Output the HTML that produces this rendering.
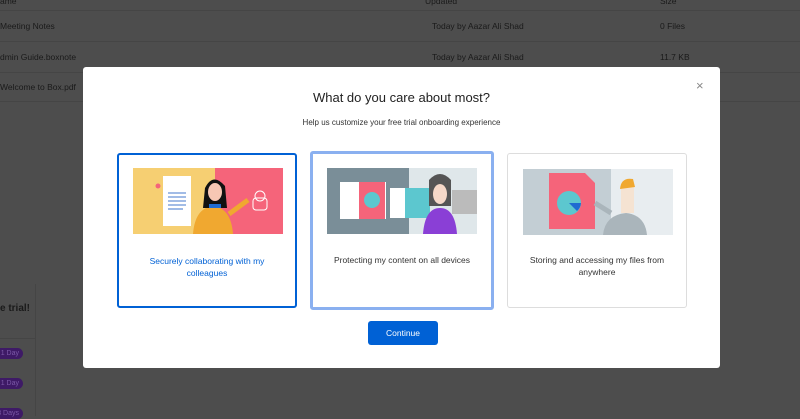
<!DOCTYPE html>
<html><head><meta charset="utf-8"><style>
*{margin:0;padding:0;box-sizing:border-box}
html,body{background:#4d4d4d}
body{width:800px;height:416px;overflow:hidden;font-family:"Liberation Sans",sans-serif;position:relative;color:#222}
.abs{position:absolute}
.tx{position:absolute;font-size:8.5px;color:#1a1a1a;white-space:nowrap}
.ln{position:absolute;left:0;width:800px;height:1px;background:#454545}
.modal{position:absolute;left:83px;top:67px;width:637px;height:301px;background:#fff;border-radius:3px}
.card{position:absolute;background:#fff;border:1px solid #ddd;border-radius:3px}
.card .t{position:absolute;left:0;right:0;text-align:center;font-size:8.5px;line-height:12px;color:#333}
.pill{position:absolute;left:-10px;width:33px;height:11px;border-radius:6px;background:#3e1a66;color:#7c5aa8;font-size:7px;text-align:right;padding-right:4px;line-height:11px}
</style></head><body>
<div class="tx" style="left:0;top:-4px">ame</div><div class="tx" style="left:425px;top:-4px">Updated</div><div class="tx" style="left:660px;top:-4px">Size</div>
<div class="ln" style="top:10px"></div>
<div class="tx" style="left:0;top:21px">Meeting Notes</div><div class="tx" style="left:432px;top:21px">Today by Aazar Ali Shad</div><div class="tx" style="left:660px;top:21px">0 Files</div>
<div class="ln" style="top:41px"></div>
<div class="tx" style="left:0;top:52px">dmin Guide.boxnote</div><div class="tx" style="left:432px;top:52px">Today by Aazar Ali Shad</div><div class="tx" style="left:660px;top:52px">11.7 KB</div>
<div class="ln" style="top:72px"></div>
<div class="tx" style="left:0;top:82px">Welcome to Box.pdf</div>
<div class="ln" style="top:101px"></div>
<div class="abs" style="left:0;top:284px;width:36px;height:132px;border-right:1px solid #454545"></div>
<div class="abs" style="left:0;top:303px;font-size:10px;font-weight:bold;color:#1a1a1a">e trial!</div>
<div class="abs" style="left:0;top:338px;width:36px;border-top:1px solid #454545"></div>
<div class="pill" style="top:348px">1 Day</div>
<div class="pill" style="top:378px">1 Day</div>
<div class="pill" style="top:408px">3 Days</div>

<div class="modal">
<div class="abs" style="left:613px;top:11px;font-size:13px;color:#888">×</div>
<div class="abs" style="left:0;right:0;top:23px;text-align:center;font-size:13px;color:#222">What do you care about most?</div>
<div class="abs" style="left:0;right:0;top:51px;text-align:center;font-size:8px;color:#333">Help us customize your free trial onboarding experience</div>

<div class="card" style="left:34px;top:86px;width:180px;height:155px;border:2px solid #0061d5">
<svg class="abs" style="left:14px;top:13px" width="150" height="66">
<rect width="85" height="66" fill="#f6cf72"/><rect x="82" width="68" height="66" fill="#f5647a"/>
<rect x="30" y="8" width="28" height="50" fill="#fff"/><circle cx="25" cy="18" r="2.5" fill="#f5647a"/>
<g stroke="#6a95d8" stroke-width="1.3"><line x1="35" y1="25" x2="53" y2="25"/><line x1="35" y1="29" x2="53" y2="29"/><line x1="35" y1="33" x2="53" y2="33"/><line x1="35" y1="37" x2="53" y2="37"/><line x1="35" y1="41" x2="50" y2="41"/></g>
<path d="M60 66 Q62 40 80 38 Q98 40 100 66Z" fill="#f0a830"/><path d="M96 46 L115 32" stroke="#f0a830" stroke-width="5"/>
<path d="M72 20 Q80 4 92 18 L94 40 L70 40Z" fill="#111"/><ellipse cx="82" cy="24" rx="7" ry="9" fill="#f7c7b4"/><rect x="76" y="36" width="12" height="4" fill="#1f6bd1"/>
<circle cx="127" cy="28" r="5" fill="none" stroke="#fff"/><rect x="120" y="30" width="14" height="12" rx="3" fill="none" stroke="#fff"/>
</svg>
<div class="t" style="top:100px;color:#0061d5;padding:0 25px">Securely collaborating with my colleagues</div>
</div>

<div class="card" style="left:227px;top:84px;width:184px;height:159px;border:3px solid #8ab0f0">
<svg class="abs" style="left:14px;top:14px" width="150" height="66">
<rect width="82" height="66" fill="#7a8e98"/><rect x="82" width="68" height="66" fill="#dfe7ea"/>
<rect x="13" y="14" width="46" height="37" fill="#fff"/><rect x="32" y="14" width="26" height="37" fill="#f5647a"/>
<circle cx="45" cy="32" r="8" fill="#5cc7cf"/><rect x="63" y="20" width="40" height="30" fill="#fff"/><rect x="78" y="20" width="25" height="30" fill="#5cc7cf"/>
<path d="M96 66 Q98 40 113 40 Q128 40 130 66Z" fill="#8a3fd6"/><path d="M102 12 Q113 0 124 12 L124 38 L102 38Z" fill="#555"/><ellipse cx="113" cy="26" rx="7" ry="10" fill="#f5d8c8"/>
<rect x="125" y="22" width="25" height="24" fill="#bbb"/>
</svg>
<div class="t" style="top:100px">Protecting my content on all devices</div>
</div>

<div class="card" style="left:424px;top:86px;width:180px;height:155px">
<svg class="abs" style="left:15px;top:15px" width="150" height="66">
<rect width="88" height="66" fill="#c3ced4"/><rect x="88" width="62" height="66" fill="#e8edf0"/>
<path d="M26 4 H62 L72 14 V60 H26Z" fill="#f5647a"/><circle cx="46" cy="34" r="12" fill="#5cc7cf"/><path d="M46 34 L58 34 A12 12 0 0 1 54 42Z" fill="#1f6bd1"/>
<path d="M72 34 L88 44" stroke="#aab5bb" stroke-width="5"/><path d="M80 66 Q82 46 103 44 Q122 46 124 66Z" fill="#aab5bb"/>
<rect x="98" y="18" width="13" height="26" fill="#f5e3d2"/><path d="M97 20 Q98 8 110 10 L112 18Z" fill="#f0a830"/>
</svg>
<div class="t" style="top:100px;padding:0 20px">Storing and accessing my files from anywhere</div>
</div>

<div class="abs" style="left:285px;top:254px;width:70px;height:24px;background:#0061d5;border-radius:3px;color:#fff;font-size:8.5px;text-align:center;line-height:24px">Continue</div>
</div>
</body></html>
